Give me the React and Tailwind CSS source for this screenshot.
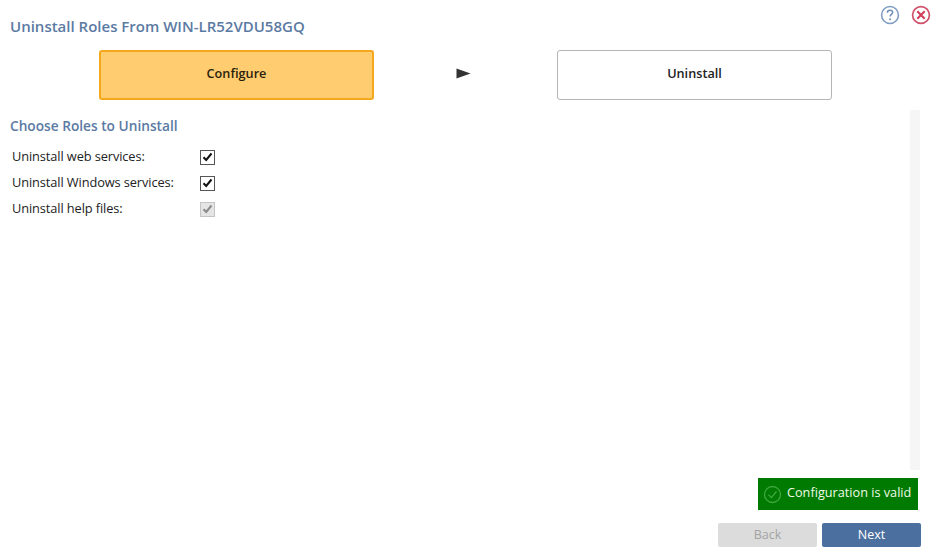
const font = { fontFamily: '"Open Sans", "Noto Sans", sans-serif' };

function RoleCheck({ label, disabled }) {
  return (
    <div className="flex h-[26px] items-center">
      <span className="w-[188px] text-[12.8px] tracking-[-0.1px] text-[#222]">{label}</span>
      <span
        className={
          "flex h-[15px] w-[15px] items-center justify-center border " +
          (disabled ? "border-[#c4c4c4] bg-[#e4e4e4]" : "border-[#555] bg-white")
        }
      >
        <svg width="11" height="10" viewBox="0 0 11 10" fill="none">
          <path
            d="M1.5 5.2 L4.2 8 L9.5 1.5"
            stroke={disabled ? "#8a8a8a" : "#111"}
            strokeWidth="2"
          />
        </svg>
      </span>
    </div>
  );
}

export default function App() {
  return (
    <div style={font} className="flex h-[558px] w-[935px] flex-col overflow-hidden bg-white">
      {/* header */}
      <div className="flex h-[50px] shrink-0 items-start justify-between">
        <h1 className="mt-[16px] ml-[10px] text-[15px] leading-[20px] font-semibold text-[#5b7aa3]">
          Uninstall Roles From WIN-LR52VDU58GQ
        </h1>
        <div className="mt-[5px] mr-[4px] flex items-center gap-[11px]">
          <svg width="20" height="20" viewBox="0 0 19 19" fill="none">
            <circle cx="9.5" cy="9.5" r="8" stroke="#7f9cc2" strokeWidth="1.5" />
            <path
              d="M7 7.4 C7 5.8 8.2 5 9.5 5 C10.9 5 12 5.9 12 7.1 C12 8.9 9.6 9 9.6 11"
              stroke="#6d8cb5"
              strokeWidth="1.4"
            />
            <circle cx="9.6" cy="13.6" r="0.9" fill="#6d8cb5" />
          </svg>
          <svg width="20" height="20" viewBox="0 0 19 19" fill="none">
            <circle cx="9.5" cy="9.5" r="8" stroke="#d0526a" strokeWidth="1.6" />
            <path d="M6 6 L13 13 M13 6 L6 13" stroke="#d33f5a" strokeWidth="2" />
          </svg>
        </div>
      </div>

      {/* steps */}
      <div className="flex h-[50px] shrink-0 items-center pl-[99px]">
        <div className="flex h-[50px] w-[275px] items-center justify-center rounded-[3px] border-2 border-[#f5a81c] bg-[#ffcc70] pb-[2px] text-[12.7px] font-semibold text-[#2a1f0c]">
          Configure
        </div>
        <svg className="mb-[3px] ml-[82px]" width="15" height="11" viewBox="0 0 15 11">
          <path d="M0.5 0.5 L14.5 5.5 L0.5 10.5 Z" fill="#333" />
        </svg>
        <div className="ml-[86px] flex h-[50px] w-[275px] items-center justify-center rounded-[3px] border border-[#b5b5b5] bg-white pb-[2px] text-[12.7px] font-semibold text-[#222]">
          Uninstall
        </div>
      </div>

      {/* body */}
      <div className="flex h-[370px] shrink-0 pt-[10px]">
        <div className="flex-1 pl-[10px]">
          <h2 className="mt-[6px] text-[13.7px] leading-[20px] font-semibold text-[#5b7aa3]">
            Choose Roles to Uninstall
          </h2>
          <div className="mt-[8px] pl-[2px]">
            <RoleCheck label="Uninstall web services:" />
            <RoleCheck label="Uninstall Windows services:" />
            <RoleCheck label="Uninstall help files:" disabled />
          </div>
        </div>
        <div className="mr-[15px] w-[10px] bg-[#f6f6f6]" />
      </div>

      {/* status */}
      <div className="mt-[8px] flex justify-end pr-[17px]">
        <div className="flex h-[32px] w-[160px] items-center bg-[#007a00] pb-[3px] pl-[5px] text-[12.7px] text-[#f0fae8]">
          <svg className="mt-[3px] mr-[5px] shrink-0" width="19" height="19" viewBox="0 0 19 19" fill="none">
            <circle cx="9.5" cy="9.5" r="8" stroke="#3fa83f" strokeWidth="1.3" />
            <path d="M5.5 9.8 L8.4 12.6 L13.5 6.5" stroke="#3fa83f" strokeWidth="1.3" />
          </svg>
          Configuration is valid
        </div>
      </div>

      {/* footer */}
      <div className="mt-[13px] flex justify-end gap-[5px] pr-[14px]">
        <button className="h-[24px] w-[99px] rounded-[2px] bg-[#dcdcdc] text-[12.5px] font-medium text-[#a3a3a3]">
          Back
        </button>
        <button className="h-[24px] w-[99px] rounded-[2px] bg-[#4b6f9f] text-[12.5px] font-medium text-white">
          Next
        </button>
      </div>
    </div>
  );
}
